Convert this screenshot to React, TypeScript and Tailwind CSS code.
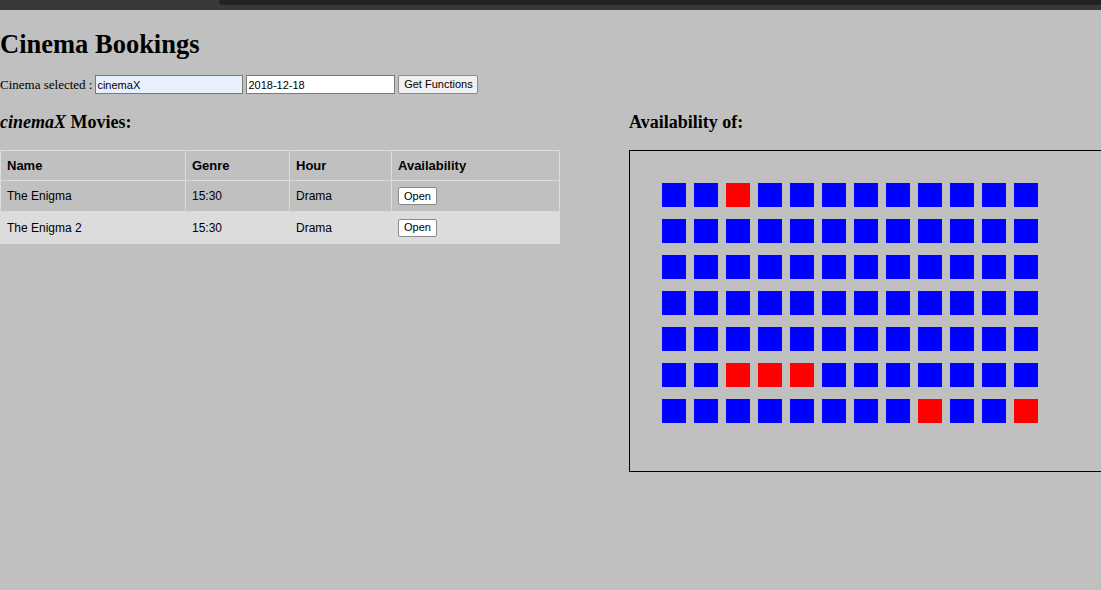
const seats: number[][] = [
  [0, 0, 1, 0, 0, 0, 0, 0, 0, 0, 0, 0],
  [0, 0, 0, 0, 0, 0, 0, 0, 0, 0, 0, 0],
  [0, 0, 0, 0, 0, 0, 0, 0, 0, 0, 0, 0],
  [0, 0, 0, 0, 0, 0, 0, 0, 0, 0, 0, 0],
  [0, 0, 0, 0, 0, 0, 0, 0, 0, 0, 0, 0],
  [0, 0, 1, 1, 1, 0, 0, 0, 0, 0, 0, 0],
  [0, 0, 0, 0, 0, 0, 0, 0, 1, 0, 0, 1],
];

const movies = [
  { name: 'The Enigma', genre: '15:30', hour: 'Drama' },
  { name: 'The Enigma 2', genre: '15:30', hour: 'Drama' },
];

const App = () => {
  return (
    <div className="w-[1101px] h-[590px] overflow-hidden bg-[#c0c0c0] text-black font-['Liberation_Serif',serif] text-[13px]">
      <div className="relative h-[10px] bg-[#393939]">
        <div className="absolute left-[219px] top-0 right-0 h-[5px] bg-[#222222] rounded-bl-[4px]" />
      </div>
      <main>
        <h1 className="mt-[19px] text-[26.5px] leading-[30px] font-bold">Cinema Bookings</h1>
        <div className="mt-[16px] flex items-center h-[19px]">
          <span>Cinema selected :</span>
          <input
            className="ml-[3px] w-[148px] h-[19px] border border-[#7a7a7a] bg-[#e8f0fe] px-[1px] text-[11px] font-['Liberation_Sans',sans-serif] outline-none"
            type="text"
            defaultValue="cinemaX"
          />
          <input
            className="ml-[3px] w-[149px] h-[19px] border border-[#7a7a7a] bg-white px-[1px] text-[11px] font-['Liberation_Sans',sans-serif] outline-none"
            type="text"
            defaultValue="2018-12-18"
          />
          <button className="ml-[3px] w-[80px] h-[19px] border border-[#8a8a8a] rounded-[2px] bg-[#f0f0f0] text-[11px] font-['Liberation_Sans',sans-serif]">
            Get Functions
          </button>
        </div>
        <div className="flex mt-[17px]">
          <div className="w-[560px]">
            <h3 className="text-[18px] leading-[22px] font-bold">
              <i>cinemaX</i> Movies:
            </h3>
            <table className="mt-[17px] w-[560px] border-collapse font-['Liberation_Sans',sans-serif] text-[12px]">
              <thead>
                <tr className="h-[30px]">
                  <th className="w-[185px] border border-[#dcdcdc] px-[6px] text-left text-[13px]">Name</th>
                  <th className="w-[104px] border border-[#dcdcdc] px-[6px] text-left text-[13px]">Genre</th>
                  <th className="w-[102px] border border-[#dcdcdc] px-[6px] text-left text-[13px]">Hour</th>
                  <th className="border border-[#dcdcdc] px-[6px] text-left text-[13px]">Availability</th>
                </tr>
              </thead>
              <tbody>
                {movies.map((movie, i) => (
                  <tr key={movie.name} className={i % 2 === 1 ? 'h-[32px] bg-[#dcdcdc]' : 'h-[31px]'}>
                    <td className="border border-[#dcdcdc] px-[6px]">{movie.name}</td>
                    <td className="border border-[#dcdcdc] px-[6px]">{movie.genre}</td>
                    <td className="border border-[#dcdcdc] px-[6px]">{movie.hour}</td>
                    <td className="border border-[#dcdcdc] px-[6px]">
                      <button className="w-[39px] h-[18px] border border-[#8a8a8a] rounded-[2px] bg-white text-[11px] leading-none">
                        Open
                      </button>
                    </td>
                  </tr>
                ))}
              </tbody>
            </table>
          </div>
          <div className="ml-[69px]">
            <h3 className="text-[18px] leading-[22px] font-bold">Availability of:</h3>
            <div className="mt-[17px] w-[500px] h-[322px] border border-black pt-[32px] pl-[32px]">
              <div className="flex flex-col gap-[12px]">
                {seats.map((row, r) => (
                  <div key={r} className="flex gap-[8px]">
                    {row.map((taken, c) => (
                      <div key={c} className={taken ? 'w-[24px] h-[24px] bg-[#ff0000]' : 'w-[24px] h-[24px] bg-[#0000ff]'} />
                    ))}
                  </div>
                ))}
              </div>
            </div>
          </div>
        </div>
      </main>
    </div>
  );
};

export default App;
